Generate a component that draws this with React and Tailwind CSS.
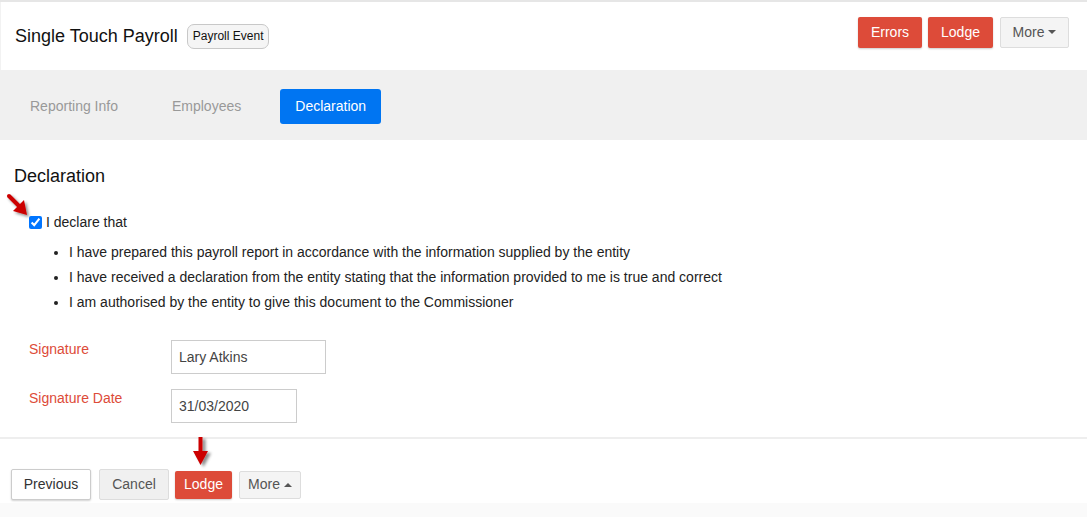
import React from 'react';

const font = { fontFamily: '"Liberation Sans", Arial, sans-serif' };

const ArrowDiag = () => (
  <svg width="28" height="28" viewBox="0 0 28 28" className="absolute left-[4px] top-[192px]">
    <defs>
      <filter id="sh1" x="-50%" y="-50%" width="200%" height="200%">
        <feDropShadow dx="2" dy="2" stdDeviation="1.5" floodColor="#000" floodOpacity="0.45" />
      </filter>
    </defs>
    <g filter="url(#sh1)">
      <line x1="5" y1="4" x2="16" y2="15" stroke="#c00" strokeWidth="4" strokeLinecap="round" />
      <polygon points="23,23 9,19 20,8" fill="#c00" />
    </g>
  </svg>
);

const ArrowDown = () => (
  <svg width="26" height="34" viewBox="0 0 26 34" className="absolute left-[188px] top-[435px]">
    <defs>
      <filter id="sh2" x="-50%" y="-50%" width="200%" height="200%">
        <feDropShadow dx="3" dy="2" stdDeviation="1.5" floodColor="#000" floodOpacity="0.45" />
      </filter>
    </defs>
    <g filter="url(#sh2)">
      <rect x="10.5" y="2" width="4" height="16" fill="#c00" />
      <polygon points="5,16 20,16 12.5,30" fill="#c00" />
    </g>
  </svg>
);

export default function App() {
  return (
    <div className="relative w-[1087px] h-[517px] bg-white overflow-hidden text-[#222]" style={font}>
      <div className="h-[2px] bg-[#e6e6e6]" />
      {/* Header */}
      <div className="h-[68px] flex items-center justify-between pl-[14px] pr-[18px] border-l border-[#f2f2f2]">
        <div className="flex items-center gap-[9px]">
          <h1 className="text-[18px] text-[#111] leading-none">Single Touch Payroll</h1>
          <span className="text-[12px] text-[#111] bg-[#f5f5f5] border border-[#c8c8c8] rounded-[7px] px-[5px] h-[25px] flex items-center">Payroll Event</span>
        </div>
        <div className="flex items-center -mt-[8px]">
          <button className="w-[64px] h-[31px] bg-[#dd4b39] text-white text-[14px] rounded-[2px] shadow-[0_1px_2px_rgba(0,0,0,0.2)]">Errors</button>
          <button className="w-[65px] h-[31px] ml-[6px] bg-[#dd4b39] text-white text-[14px] rounded-[2px] shadow-[0_1px_2px_rgba(0,0,0,0.2)]">Lodge</button>
          <button className="w-[69px] h-[31px] ml-[7px] bg-[#f4f4f4] text-[#555] text-[14px] border border-[#ddd] rounded-[2px] flex items-center justify-center gap-[4px]">
            More
            <span className="w-0 h-0 border-l-[4px] border-r-[4px] border-t-[4px] border-l-transparent border-r-transparent border-t-[#555]" />
          </button>
        </div>
      </div>
      {/* Tabs */}
      <div className="h-[70px] bg-[#f0f0f0] flex items-center pl-[15px] pt-[2px]">
        <div className="px-[15px] h-[35px] flex items-center text-[14px] text-[#999]">Reporting Info</div>
        <div className="ml-[35px] px-[4px] h-[35px] flex items-center text-[14px] text-[#999]">Employees</div>
        <div className="ml-[35px] w-[101px] h-[35px] bg-[#0075f2] rounded-[3px] flex items-center justify-center text-[14px] text-white">Declaration</div>
      </div>
      {/* Body */}
      <div className="pl-[14px] pt-[27px]">
        <h2 className="text-[18px] text-[#111] leading-none">Declaration</h2>
        <label className="flex items-center mt-[27px] ml-[15px] text-[14px] text-[#222]">
          <input type="checkbox" defaultChecked className="w-[13px] h-[13px] m-0 accent-[#0075ff]" />
          <span className="ml-[4px]">I declare that</span>
        </label>
        <ul className="list-disc ml-[55px] mt-[7px] text-[14px] text-[#222] leading-[25px]">
          <li>I have prepared this payroll report in accordance with the information supplied by the entity</li>
          <li>I have received a declaration from the entity stating that the information provided to me is true and correct</li>
          <li>I am authorised by the entity to give this document to the Commissioner</li>
        </ul>
        <div className="mt-[25px] ml-[15px] flex flex-col gap-[15px]">
          <div className="flex items-start">
            <div className="w-[142px] text-[14px] text-[#dd4b39] -mt-[1px]">Signature</div>
            <div className="w-[155px] h-[34px] border border-[#ccc] flex items-center pl-[7px] text-[14px] text-[#444]">Lary Atkins</div>
          </div>
          <div className="flex items-start">
            <div className="w-[142px] text-[14px] text-[#dd4b39] -mt-[1px]">Signature Date</div>
            <div className="w-[126px] h-[34px] border border-[#ccc] flex items-center pl-[7px] text-[14px] text-[#444]">31/03/2020</div>
          </div>
        </div>
      </div>
      <div className="absolute left-0 right-0 top-[437px] h-[2px] bg-[#eeeeee]" />
      {/* Footer */}
      <div className="absolute left-[11px] top-[469px] flex items-center gap-[8px]">
        <button className="w-[80px] h-[31px] bg-white border border-[#ccc] text-[14px] text-[#333] rounded-[2px] shadow-[0_1px_2px_rgba(0,0,0,0.18)]">Previous</button>
        <button className="w-[70px] h-[31px] bg-[#f0f0f0] border border-[#ddd] text-[14px] text-[#555] rounded-[2px]">Cancel</button>
        <button className="w-[57px] h-[28px] -ml-[2px] bg-[#dd4b39] text-white text-[14px] rounded-[2px] shadow-[0_1px_2px_rgba(0,0,0,0.2)]">Lodge</button>
        <button className="w-[62px] h-[28px] -ml-[1px] bg-[#f4f4f4] border border-[#ddd] text-[14px] text-[#555] rounded-[2px] flex items-center justify-center gap-[4px]">
          More
          <span className="w-0 h-0 border-l-[4px] border-r-[4px] border-b-[4px] border-l-transparent border-r-transparent border-b-[#555]" />
        </button>
      </div>
      <div className="absolute left-0 right-0 bottom-0 h-[14px] bg-[#fafafa]" />
      <ArrowDiag />
      <ArrowDown />
    </div>
  );
}
